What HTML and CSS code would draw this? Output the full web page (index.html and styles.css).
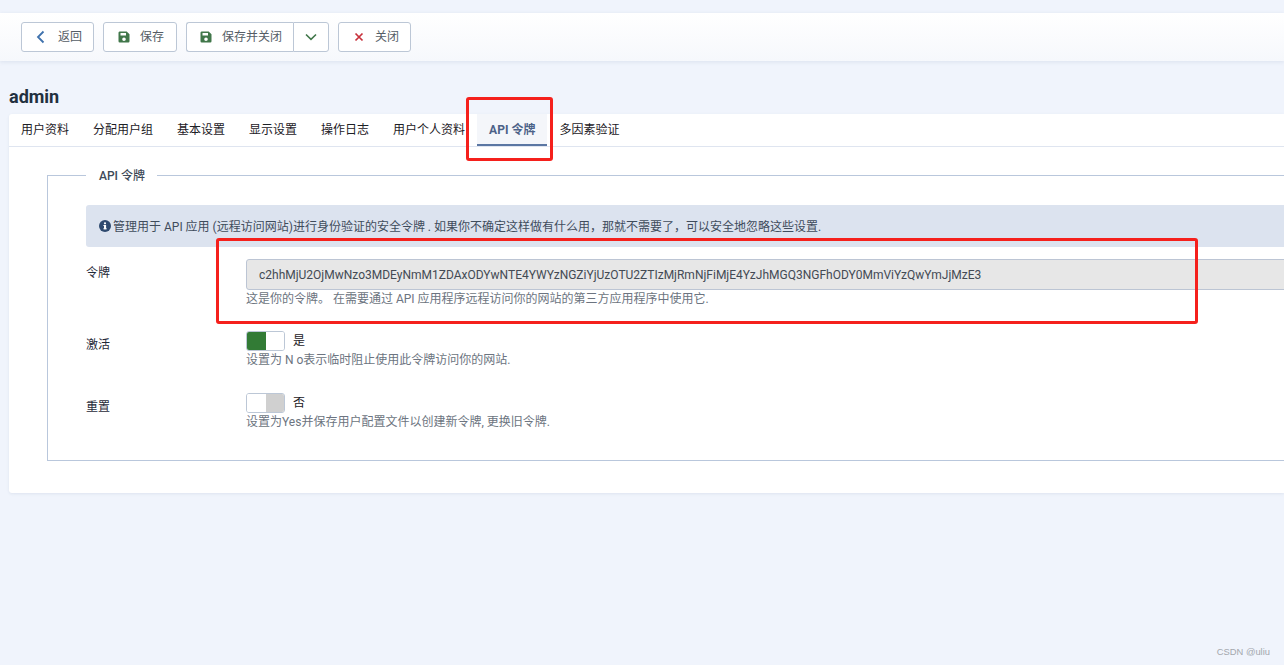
FILE: index.html
```html
<!DOCTYPE html>
<html lang="zh-CN">
  <head>
    <meta charset="UTF-8" />
    <meta name="viewport" content="width=device-width, initial-scale=1.0" />
    <title>admin</title>
    <link rel="stylesheet" href="styles.css">
  </head>
  <body>
    <!-- Toolbar -->
    <div class="toolbar">
      <button class="btn btn-back" type="button">
        <svg class="icon" width="9" height="14" viewBox="0 0 9 14"><path d="M7.5 1.5 2 7l5.5 5.5" fill="none" stroke="#3f72ad" stroke-width="1.8"/></svg>
        <span>返回</span>
      </button>
      <button class="btn btn-save" type="button">
        <svg class="icon" width="12" height="12" viewBox="0 0 12 12"><path fill="#41774a" fill-rule="evenodd" d="M1.5 0.5h7.2L11.5 3.3v7a1.2 1.2 0 0 1-1.2 1.2H1.7A1.2 1.2 0 0 1 .5 10.300v-8.600A1.200 1.200 0 0 1 1.500 .5zM2.500 2v2.500h5.500V2zM6 6.500a1.800 1.800 0 1 0 0 3.600 1.800 1.800 0 0 0 0-3.600z"/></svg>
        <span>保存</span>
      </button>
      <div class="btn-split">
        <button class="btn btn-main" type="button">
          <svg class="icon" width="12" height="12" viewBox="0 0 12 12"><path fill="#41774a" fill-rule="evenodd" d="M1.500 0.500h7.200L11.500 3.300v7a1.200 1.200 0 0 1-1.200 1.200H1.700A1.200 1.200 0 0 1 .5 10.300v-8.600A1.200 1.200 0 0 1 1.500 .5zM2.500 2v2.500h5.500V2zM6 6.500a1.800 1.800 0 1 0 0 3.600 1.800 1.800 0 0 0 0-3.600z"/></svg>
          <span>保存并关闭</span>
        </button>
        <button class="btn btn-caret" type="button">
          <svg width="12" height="8" viewBox="0 0 12 8"><path d="M1 1.500 6 6.300l5-4.800" fill="none" stroke="#41774a" stroke-width="1.600"/></svg>
        </button>
      </div>
      <button class="btn btn-close" type="button">
        <svg class="icon" width="10" height="10" viewBox="0 0 10 10"><path d="M1.500 1.500l7 7m0-7-7 7" fill="none" stroke="#c8313c" stroke-width="1.700"/></svg>
        <span>关闭</span>
      </button>
    </div>

    <h1 class="page-title">admin</h1>

    <div class="card">
      <!-- Tabs -->
      <div class="tabs">
        <a class="tab">用户资料</a>
        <a class="tab">分配用户组</a>
        <a class="tab">基本设置</a>
        <a class="tab">显示设置</a>
        <a class="tab">操作日志</a>
        <a class="tab">用户个人资料</a>
        <a class="tab active">API 令牌</a>
        <a class="tab">多因素验证</a>
      </div>

      <fieldset class="options">
        <legend>API 令牌</legend>

        <div class="alert">
          <svg class="alert-icon" width="12" height="12" viewBox="0 0 12 12"><circle cx="6" cy="6" r="6" fill="#2f4a6f"/><rect x="5" y="5" width="2.100" height="4.200" fill="#fff"/><rect x="4.400" y="8.300" width="3.300" height="1" fill="#fff"/><rect x="4.400" y="5" width="2" height="1" fill="#fff"/><circle cx="6" cy="3.300" r="1.100" fill="#fff"/></svg>
          <span class="alert-text">管理用于 API 应用 (远程访问网站)进行身份验证的安全令牌 . 如果你不确定这样做有什么用，那就不需要了，可以安全地忽略这些设置.</span>
        </div>

        <div class="field field-token">
          <label class="field-label">令牌</label>
          <div class="field-body">
            <div class="token-input">c2hhMjU2OjMwNzo3MDEyNmM1ZDAxODYwNTE4YWYzNGZiYjUzOTU2ZTIzMjRmNjFiMjE4YzJhMGQ3NGFhODY0MmViYzQwYmJjMzE3</div>
            <div class="hint">这是你的令牌。 在需要通过 API 应用程序远程访问你的网站的第三方应用程序中使用它.</div>
          </div>
        </div>

        <div class="field field-switch">
          <label class="field-label">激活</label>
          <div class="field-body">
            <div class="switch-row">
              <span class="switch on"><i></i><i></i></span>
              <span class="switch-text">是</span>
            </div>
            <div class="hint">设置为 N o表示临时阻止使用此令牌访问你的网站.</div>
          </div>
        </div>

        <div class="field field-switch">
          <label class="field-label">重置</label>
          <div class="field-body">
            <div class="switch-row">
              <span class="switch off"><i></i><i></i></span>
              <span class="switch-text">否</span>
            </div>
            <div class="hint">设置为Yes并保存用户配置文件以创建新令牌, 更换旧令牌.</div>
          </div>
        </div>
      </fieldset>
    </div>

    <!-- Annotations on top of the screenshot -->
    <div class="mark mark-tab"></div>
    <div class="mark mark-token"></div>
    <div class="watermark">CSDN @uliu</div>
  </body>
</html>
```

FILE: styles.css
```css
* {
  box-sizing: border-box;
}

html,
body {
  height: 100%;
}

body {
  position: relative;
  margin: 0;
  overflow: hidden;
  padding-top: 13px;
  background-color: #f0f4fc;
  color: #22262a;
  font-family: Roboto, "Noto Sans CJK SC", sans-serif;
  font-size: 12px;
}

/* Toolbar */
.toolbar {
  display: flex;
  align-items: center;
  gap: 9.500px;
  height: 48px;
  padding: 0 21px;
  background: linear-gradient(#ffffff, #f6f8fc);
  box-shadow: 0 1px 4px rgba(100, 120, 160, 0.15);
}

.btn {
  display: flex;
  align-items: center;
  height: 30px;
  padding: 0;
  border: 1px solid #bcc7d6;
  border-radius: 3px;
  background-color: #ffffff;
  color: #555d66;
  font-family: inherit;
  font-size: 12px;
}

.btn span {
  margin-top: -3px;
}

.btn svg {
  margin-top: -1px;
}

.btn-back {
  width: 72.500px;
  padding-left: 14px;
}

.btn-back .icon {
  margin-right: 13px;
}

.btn-save {
  width: 73.500px;
  padding-left: 14px;
}

.btn-save .icon,
.btn-main .icon {
  margin-right: 10px;
}

.btn-split {
  display: flex;
}

.btn-main {
  width: 106.500px;
  padding-left: 13px;
  border-radius: 3px 0 0 3px;
  border-right: 0;
}

.btn-caret {
  justify-content: center;
  width: 36px;
  border-radius: 0 3px 3px 0;
}

.btn-close {
  width: 72.500px;
  padding-left: 15px;
}

.btn-close .icon {
  margin-right: 11px;
}

.page-title {
  height: 24px;
  margin: 24px 0 0 9px;
  color: #22303f;
  font-size: 18px;
  font-weight: 700;
  line-height: 24px;
}

/* Card and tabs */
.card {
  height: 379px;
  margin: 5px 0 0 9px;
  overflow: hidden;
  border-radius: 3px 0 0 3px;
  background-color: #ffffff;
  box-shadow: 0 1px 3px rgba(100, 120, 160, 0.12);
}

.tabs {
  display: flex;
  height: 33px;
  border-bottom: 1px solid #dfe5f0;
}

.tab {
  display: block;
  height: 32px;
  padding: 0 12px;
  color: #1c2026;
  line-height: 33px;
}

.tab.active {
  border-bottom: 2px solid #5b77a3;
  background-color: #f4f6fa;
  color: #4c6288;
  font-weight: 700;
}

.options {
  min-width: 0;
  height: 293px;
  margin: 21px -100px 0 38px;
  padding: 0 0 0 38px;
  border: 1px solid #b9c7dc;
}

.options legend {
  padding: 2px 12px 0 13px;
  color: #3e4a58;
  font-weight: 500;
  line-height: 13px;
}

.alert {
  display: flex;
  align-items: center;
  height: 42px;
  margin-top: 22px;
  padding: 0 13px;
  border-radius: 3px;
  background-color: #dce3ef;
  color: #3f4c5c;
}

.alert-icon {
  margin-right: 2px;
}

.alert-text {
  margin-top: -2px;
}

/* Form rows */
.field {
  display: flex;
}

.field-label {
  width: 160px;
  color: #1f2a38;
  line-height: 16px;
}

.field-body {
  flex: 1;
}

.field-token {
  margin-top: 12px;
}

.field-token .field-label {
  margin-top: 6px;
}

.token-input {
  height: 31px;
  padding-left: 12px;
  border: 1px solid #bcc5d4;
  border-radius: 3px;
  background-color: #e7e7e7;
  color: #434a54;
  font-size: 12px;
  line-height: 31px;
}

.hint {
  color: #6c7480;
  line-height: 16px;
}

.field-token .hint {
  margin-top: 1px;
}

.field-switch {
  margin-top: 24px;
}

.field-switch .field-label {
  margin-top: 6px;
}

.field-switch .hint {
  margin-top: 1px;
}

.field-switch + .field-switch {
  margin-top: 25px;
}

.switch-row {
  display: flex;
  align-items: center;
  gap: 8px;
  height: 20px;
}

.switch {
  display: flex;
  width: 39px;
  height: 20px;
  overflow: hidden;
  border: 1px solid #bcc7d6;
  border-radius: 3px;
}

.switch i {
  flex: 1;
  background-color: #ffffff;
}

.switch.on i:first-child {
  background-color: #327b35;
}

.switch.off i:last-child {
  background-color: #d0d0d0;
}

.switch-text {
  margin-top: -3px;
  color: #1c2026;
}

/* Red marks */
.mark {
  position: absolute;
  border: 3px solid #f5201c;
  border-radius: 3px;
}

.mark-tab {
  top: 97px;
  left: 466px;
  width: 86.500px;
  height: 63.500px;
}

.mark-token {
  top: 238px;
  left: 216px;
  width: 982px;
  height: 86px;
}

.watermark {
  position: absolute;
  top: 646px;
  right: 14px;
  color: #a3a7ad;
  font-family: "Liberation Sans", sans-serif;
  font-size: 9.400px;
  line-height: 12px;
}
```
